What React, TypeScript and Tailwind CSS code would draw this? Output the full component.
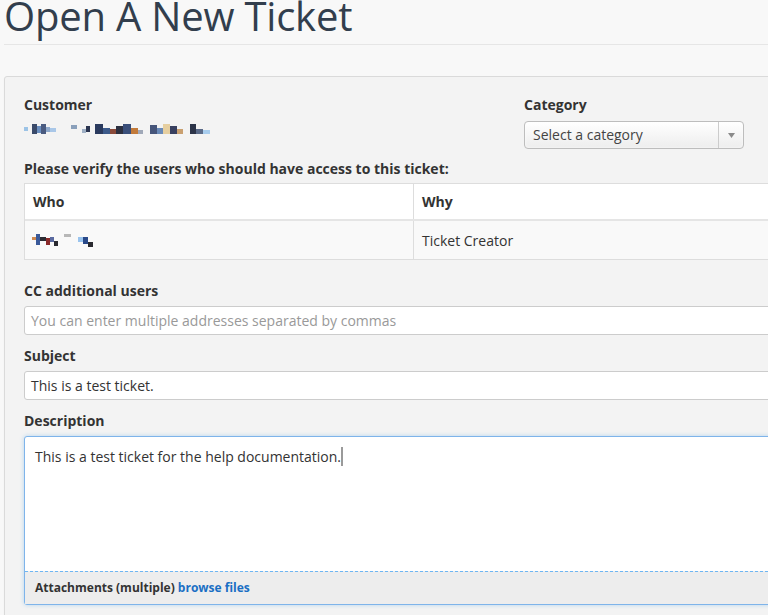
import React from "react";

const font = { fontFamily: '"Open Sans", "Noto Sans", sans-serif' };

// blurred (pixelated) name, drawn as blocks: [width, color, offsetY, height]
const customerBlocks: [number, string, number, number][] = [
  [4, "#9cc3e6", 4, 4], [4, "#f7f7f7", 0, 1], [5, "#3a4a6a", 1, 10], [4, "#6b8fc0", 3, 7], [5, "#4a5b80", 1, 10], [4, "#8fa9cc", 4, 5], [6, "#a9c7e8", 5, 4],
  [15, "transparent", 0, 1],
  [6, "#8aa0bb", 2, 4], [5, "transparent", 0, 1], [4, "#9fb0c5", 6, 4], [4, "#2b3550", 3, 6], [5, "transparent", 0, 1],
  [8, "#2a3a5e", 1, 10], [7, "#3c5a8a", 5, 6], [6, "#8a4a3a", 6, 5], [7, "#2c3040", 3, 8], [8, "#3a4f7a", 1, 10], [7, "#c27a3a", 5, 6], [5, "#a0a8b8", 7, 4],
  [7, "transparent", 0, 1],
  [7, "#46557a", 2, 9], [6, "#6a8ab8", 5, 6], [7, "#e6cfa0", 1, 10], [7, "#384060", 3, 8], [6, "#c9a070", 6, 5],
  [7, "transparent", 0, 1],
  [6, "#2c3448", 1, 10], [7, "#5a6a88", 6, 5], [7, "#a8cdee", 7, 4],
];

const whoBlocks: [number, string, number, number][] = [
  [4, "#d08a50", 3, 3], [4, "#3a5a9a", 0, 11], [6, "#2c2c34", 3, 4], [4, "#8a2a2a", 4, 7], [4, "#5a6aa0", 3, 5], [4, "#2a2a30", 7, 5],
  [6, "transparent", 0, 1],
  [7, "#b8b8b8", 0, 3],
  [7, "transparent", 0, 1],
  [5, "#9ac4ee", 3, 5], [5, "#2a4a8a", 3, 7], [5, "#2a2a30", 8, 5],
];

const Mosaic = ({ blocks }: { blocks: [number, string, number, number][] }) => (
  <div className="flex items-start h-[13px]">
    {blocks.map(([w, c, y, h], i) => (
      <span key={i} style={{ width: w, backgroundColor: c, marginTop: y, height: h }} />
    ))}
  </div>
);

const Label = ({ children }: { children: React.ReactNode }) => (
  <div className="text-[14px] leading-[20px] font-bold text-[#333333]">{children}</div>
);

export default function App() {
  return (
    <div className="w-[768px] h-[615px] overflow-hidden bg-[#f8f8f8]" style={font}>
      <div className="w-[860px]">
        <h1 className="pl-[4px] text-[40px] leading-[32px] text-[#323e4d] font-medium tracking-[-0.2px]">
          Open A New Ticket
        </h1>
        <div className="mt-[12px] ml-[4px] border-t border-[#e6e6e6]" />

        <div className="mt-[31px] ml-[4px] border border-[#dadada] rounded-[3px] bg-[#f3f3f3] pl-[19px] pt-[18px] pb-[20px] shadow-[0_1px_2px_rgba(0,0,0,0.04)]">
          <div className="grid grid-cols-[500px_1fr]">
            <div>
              <Label>Customer</Label>
              <div className="mt-[8px]">
                <Mosaic blocks={customerBlocks} />
              </div>
            </div>
            <div>
              <Label>Category</Label>
              <div className="mt-[6px] w-[220px] h-[28px] flex border border-[#bdbdbd] rounded-[4px] bg-gradient-to-b from-white to-[#ededed] shadow-[inset_0_0_3px_rgba(255,255,255,0.8)]">
                <div className="flex-1 pl-[8px] text-[14px] leading-[26px] text-[#444444]">Select a category</div>
                <div className="w-[25px] border-l border-[#cccccc] flex items-center justify-center">
                  <svg width="7" height="5" viewBox="0 0 7 5">
                    <path d="M0 0 L7 0 L3.5 5 Z" fill="#8a8a8a" />
                  </svg>
                </div>
              </div>
            </div>
          </div>

          <div className="mt-[10px]">
            <Label>Please verify the users who should have access to this ticket:</Label>
          </div>

          <div className="mt-[4px] border border-[#dddddd] bg-white text-[14px] text-[#333333]">
            <div className="grid grid-cols-[389px_1fr] h-[37px] border-b-2 border-[#e5e5e5]">
              <div className="pl-[8px] border-r border-[#dddddd] font-bold flex items-center">Who</div>
              <div className="pl-[8px] font-bold flex items-center">Why</div>
            </div>
            <div className="grid grid-cols-[389px_1fr] h-[38px] bg-[#f9f9f9]">
              <div className="pl-[7px] border-r border-[#dddddd] flex items-center">
                <Mosaic blocks={whoBlocks} />
              </div>
              <div className="pl-[8px] flex items-center text-[#333333]">Ticket Creator</div>
            </div>
          </div>

          <div className="mt-[21px]">
            <Label>CC additional users</Label>
            <div className="mt-[5px] h-[29px] border border-[#cccccc] rounded-[3px] bg-white pl-[6px] text-[14px] leading-[27px] text-[#999999]">
              You can enter multiple addresses separated by commas
            </div>
          </div>

          <div className="mt-[11px]">
            <Label>Subject</Label>
            <div className="mt-[5px] h-[29px] border border-[#cccccc] rounded-[3px] bg-white pl-[6px] text-[14px] leading-[27px] text-[#333333]">
              This is a test ticket.
            </div>
          </div>

          <div className="mt-[11px]">
            <Label>Description</Label>
            <div className="mt-[5px] h-[169px] border border-[#7eb4ea] rounded-[3px] bg-white flex flex-col shadow-[0_0_4px_rgba(102,175,233,0.45)]">
              <div className="flex-1 pl-[10px] pt-[10px] text-[14px] leading-[20px] text-[#333333]">
                This is a test ticket for the help documentation.
                <span className="inline-block align-[-4px] w-[2px] h-[19px] bg-[#9a9a9a]" />
              </div>
              <div className="h-[33px] border-t border-dashed border-[#6fb6f2] bg-[#ededed] pl-[10px] text-[12px] leading-[31px] font-bold text-[#333333]">
                Attachments (multiple) <span className="text-[#1a6fc4]">browse files</span>
              </div>
            </div>
          </div>
        </div>
      </div>
    </div>
  );
}
